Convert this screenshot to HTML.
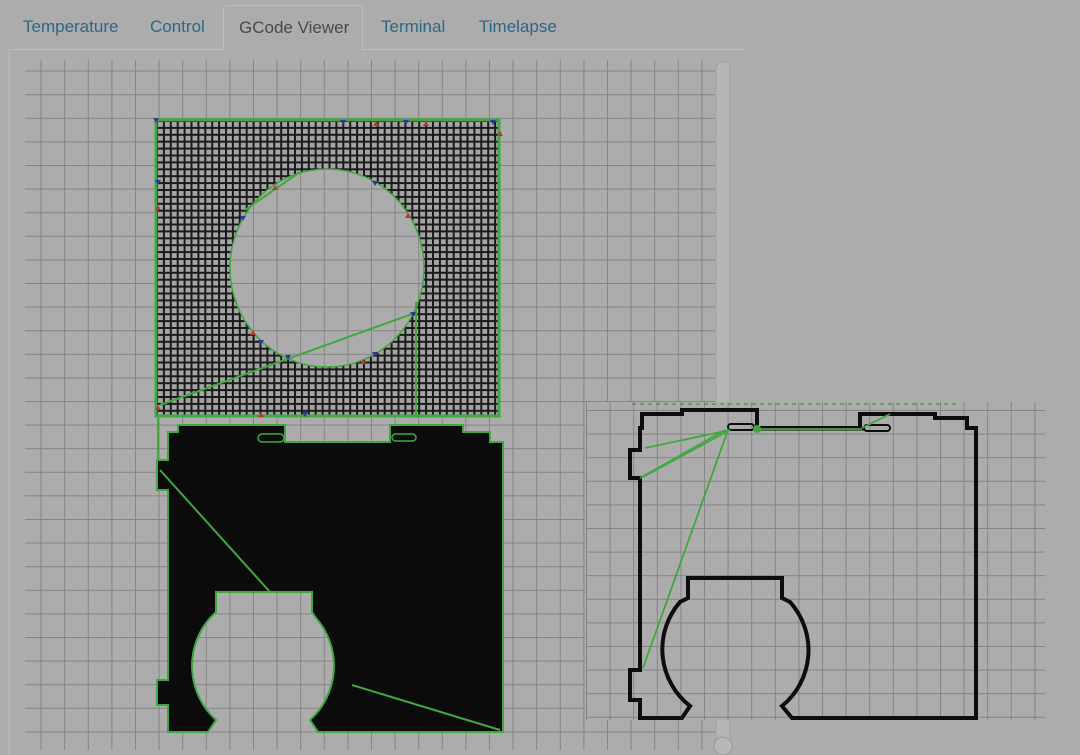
<!DOCTYPE html>
<html><head><style>
html,body{margin:0;padding:0;background:#acacac;width:1080px;height:755px;overflow:hidden;font-family:"Liberation Sans",sans-serif}
.tabs{position:absolute;left:8px;top:5px;height:44px;width:737px;border-bottom:1px solid #bdbdbd}
.tab{position:absolute;top:12px;font-size:17px;color:#2d6786}
.act{position:absolute;left:215px;top:0;width:138px;height:44px;border:1px solid #bdbdbd;border-bottom:1px solid #acacac;border-radius:4px 4px 0 0;background:#acacac}
.act span{position:absolute;left:15px;top:12px;color:#4a4a4a;font-size:17px}
svg{position:absolute;left:0;top:0}
</style></head><body>
<div class="tabs">
<div class="tab" style="left:15px">Temperature</div>
<div class="tab" style="left:142px">Control</div>
<div class="act"><span>GCode Viewer</span></div>
<div class="tab" style="left:373px">Terminal</div>
<div class="tab" style="left:471px">Timelapse</div>
</div>
<svg width="1080" height="755" viewBox="0 0 1080 755">
<defs>
<pattern id="g" x="17" y="47" width="23.6" height="23.6" patternUnits="userSpaceOnUse">
<path d="M0 0V23.6M0 0H23.6" stroke="#858585" stroke-width="2" fill="none"/>
</pattern>
<pattern id="g2" x="586" y="410" width="23.6" height="23.6" patternUnits="userSpaceOnUse">
<path d="M0 0V23.6M0 0H23.6" stroke="#858585" stroke-width="2" fill="none"/>
</pattern>
<pattern id="m" x="156" y="120" width="6.9" height="6.9" patternUnits="userSpaceOnUse">
<rect width="6.9" height="6.9" fill="#1a1a1a"/><rect x="2" y="2" width="4.9" height="4.9" fill="#a4a4a4"/>
</pattern>
<mask id="hole"><rect width="1080" height="755" fill="#fff"/><ellipse cx="327" cy="268" rx="97" ry="99" fill="#000"/></mask>
</defs>
<line x1="9" y1="49" x2="9" y2="755" stroke="#bdbdbd"/>
<rect x="25" y="60" width="690" height="690" fill="url(#g)"/>
<rect x="716" y="62" width="14" height="690" rx="6" fill="#b5b5b5" stroke="#a0a0a0"/>
<rect x="156" y="120" width="343" height="296" fill="url(#m)" mask="url(#hole)"/>
<rect x="156" y="120" width="343" height="296" fill="none" stroke="#3fa83f" stroke-width="3"/>
<ellipse cx="327" cy="268" rx="97" ry="99" fill="none" stroke="#3fa83f" stroke-width="1.5"/>
<path d="M160 405L412 314M245 210L300 172M416 302V418M158 418V462" stroke="#3fa83f" stroke-width="2" fill="none"/>
<path d="M168 442V432H178V425H285V442H390V425H463V432H490V442H503V732H318L310 720A73 73 0 0 0 316 618L312 612V592H216V612L210 618A73 73 0 0 0 216 720L208 732H168V705H157V680H168V490H157V460H168Z" fill="#0b0b0b" stroke="#3fa83f" stroke-width="2"/>
<rect x="258" y="434" width="26" height="8" rx="4" fill="#0b0b0b" stroke="#3fa83f" stroke-width="1.5"/>
<rect x="392" y="434" width="24" height="7" rx="3.5" fill="#0b0b0b" stroke="#3fa83f" stroke-width="1.5"/>
<path d="M160 470L270 592M352 685L500 730" stroke="#3fa83f" stroke-width="2"/>
<g fill="#2a3a9a"><path d="M153 118h6l-3 5zM340 120h6l-3 5zM403 120h6l-3 5zM490 120h6l-3 5zM155 180h6l-3 5zM240 216h6l-3 5zM372 181h6l-3 5zM258 340h6l-3 5zM285 355h6l-3 5zM372 352h6l-3 5zM302 412h6l-3 5zM410 312h6l-3 5z"/></g>
<g fill="#b83a2a"><path d="M373 126h6l-3-5zM423 126h6l-3-5zM155 210h6l-3-5zM272 190h6l-3-5zM405 218h6l-3-5zM250 335h6l-3-5zM258 417h6l-3-5zM360 364h6l-3-5zM155 410h6l-3-5zM497 136h6l-3-5z"/></g>
<rect x="585" y="402" width="460" height="318" fill="#acacac"/>
<rect x="586" y="402" width="459" height="318" fill="url(#g2)"/>
<path d="M632 404H960" stroke="#3fa83f" stroke-dasharray="4 4" stroke-width="1.5"/>
<path d="M642 414H682V410H757V428H860V414H935V418H967V428H976V718H792L782 706A72 72 0 0 0 790 602L782 598V578H688V598L680 602A72 72 0 0 0 690 706L682 718H640V700H630V670H640V478H630V450H640V428H642Z" fill="none" stroke="#0d0d0d" stroke-width="4"/>
<rect x="728" y="424" width="26" height="6" rx="3" fill="none" stroke="#0d0d0d" stroke-width="2"/>
<rect x="864" y="425" width="26" height="6" rx="3" fill="none" stroke="#0d0d0d" stroke-width="2"/>
<path d="M757 429H864" stroke="#0d0d0d" stroke-width="3"/>
<path d="M645 448L730 430M643 477L730 430M640 478L725 430M643 668L728 430M757 429H862M862 428L890 414" stroke="#3fa83f" stroke-width="1.8" fill="none"/>
<circle cx="757" cy="429" r="4" fill="#3fa83f"/>
<circle cx="723" cy="746" r="9" fill="#b8b8b8" stroke="#999"/>
</svg>
</body></html>
